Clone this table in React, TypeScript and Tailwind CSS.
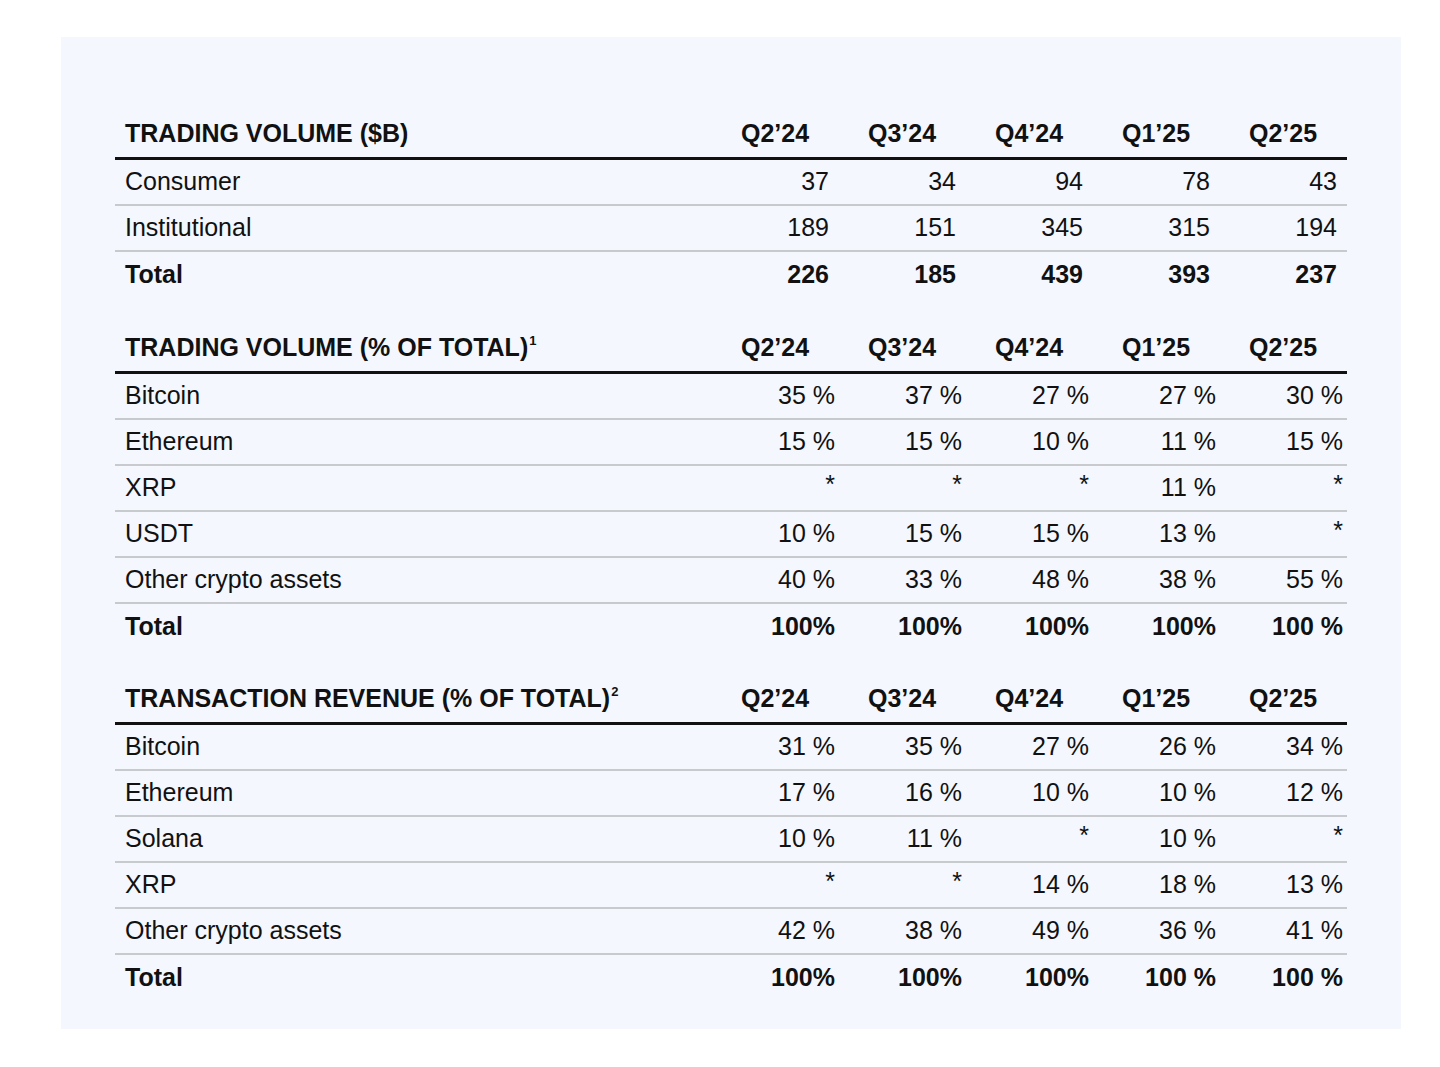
import React from 'react';

const quarters = ["Q2’24", "Q3’24", "Q4’24", "Q1’25", "Q2’25"];

interface Row {
  label: string;
  values: string[];
  bold?: boolean;
}

interface SectionProps {
  title: string;
  note?: string;
  rows: Row[];
  pad: string;
  className?: string;
}

const Section: React.FC<SectionProps> = ({ title, note, rows, pad, className }) => {
  return (
    <div className={className}>
      <div className="grid grid-cols-[1fr_127px_127px_127px_127px_127px] h-[49px] items-center border-b-[3px] border-[#111]">
        <div className="pl-[10px] font-bold whitespace-nowrap">
          {title}
          {note && <sup className="text-[13px] -top-[11px] ml-[1px]">{note}</sup>}
        </div>
        {quarters.map((q) => (
          <div key={q} className="pl-[29px] font-bold">
            {q}
          </div>
        ))}
      </div>
      {rows.map((row, i) => (
        <div
          key={row.label}
          className={`grid grid-cols-[1fr_127px_127px_127px_127px_127px] h-[46px] items-center ${
            i < rows.length - 1 ? 'border-b-2 border-[#c9cacd]' : ''
          } ${row.bold ? 'font-bold' : ''}`}
        >
          <div className="pl-[10px]">{row.label}</div>
          {row.values.map((v, j) => (
            <div key={j} className={`text-right ${pad} ${v === '*' ? '-translate-y-[3px]' : ''}`}>
              {v}
            </div>
          ))}
        </div>
      ))}
    </div>
  );
};

export default function App() {
  return (
    <div className="min-h-screen bg-white pt-[37px] pl-[61px] font-['Liberation_Sans',Arial,sans-serif] text-[25px] text-[#111]">
      <div className="w-[1340px] h-[992px] bg-[#f4f7fe] pt-[74px] px-[54px]">
        <Section
          title="TRADING VOLUME ($B)"
          pad="pr-[10px]"
          rows={[
            { label: 'Consumer', values: ['37', '34', '94', '78', '43'] },
            { label: 'Institutional', values: ['189', '151', '345', '315', '194'] },
            { label: 'Total', values: ['226', '185', '439', '393', '237'], bold: true },
          ]}
        />
        <Section
          className="mt-[27px]"
          title="TRADING VOLUME (% OF TOTAL)"
          note="1"
          pad="pr-[4px]"
          rows={[
            { label: 'Bitcoin', values: ['35 %', '37 %', '27 %', '27 %', '30 %'] },
            { label: 'Ethereum', values: ['15 %', '15 %', '10 %', '11 %', '15 %'] },
            { label: 'XRP', values: ['*', '*', '*', '11 %', '*'] },
            { label: 'USDT', values: ['10 %', '15 %', '15 %', '13 %', '*'] },
            { label: 'Other crypto assets', values: ['40 %', '33 %', '48 %', '38 %', '55 %'] },
            { label: 'Total', values: ['100%', '100%', '100%', '100%', '100 %'], bold: true },
          ]}
        />
        <Section
          className="mt-[26px]"
          title="TRANSACTION REVENUE (% OF TOTAL)"
          note="2"
          pad="pr-[4px]"
          rows={[
            { label: 'Bitcoin', values: ['31 %', '35 %', '27 %', '26 %', '34 %'] },
            { label: 'Ethereum', values: ['17 %', '16 %', '10 %', '10 %', '12 %'] },
            { label: 'Solana', values: ['10 %', '11 %', '*', '10 %', '*'] },
            { label: 'XRP', values: ['*', '*', '14 %', '18 %', '13 %'] },
            { label: 'Other crypto assets', values: ['42 %', '38 %', '49 %', '36 %', '41 %'] },
            { label: 'Total', values: ['100%', '100%', '100%', '100 %', '100 %'], bold: true },
          ]}
        />
      </div>
    </div>
  );
}
